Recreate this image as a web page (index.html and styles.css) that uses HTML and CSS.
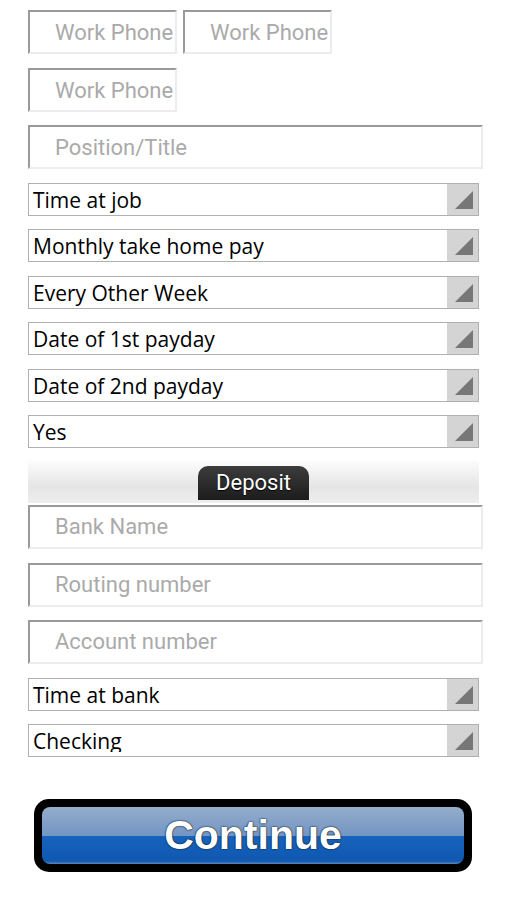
FILE: index.html
```html
<!DOCTYPE html>
<html lang="en">
<head>
    <meta charset="UTF-8">
    <meta name="viewport" content="width=device-width, initial-scale=1.0">
    <title>Employment and Deposit</title>
    <link rel="stylesheet" href="styles.css">
</head>
<body>

<form class="form" onsubmit="return false">
    <div class="phones">
        <input class="field small" type="text" placeholder="Work Phone">
        <input class="field small" type="text" placeholder="Work Phone">
    </div>
    <input class="field small gap13" type="text" placeholder="Work Phone">
    <input class="field wide" type="text" placeholder="Position/Title">

    <div class="select"><span class="value">Time at job</span><span class="arrow"></span></div>
    <div class="select"><span class="value">Monthly take home pay</span><span class="arrow"></span></div>
    <div class="select"><span class="value">Every Other Week</span><span class="arrow"></span></div>
    <div class="select"><span class="value">Date of 1st payday</span><span class="arrow"></span></div>
    <div class="select"><span class="value">Date of 2nd payday</span><span class="arrow"></span></div>
    <div class="select last"><span class="value">Yes</span><span class="arrow"></span></div>

    <div class="band">
        <div class="tab">Deposit</div>
    </div>

    <input class="field wide" type="text" placeholder="Bank Name">
    <input class="field wide gap13" type="text" placeholder="Routing number">
    <input class="field wide" type="text" placeholder="Account number">

    <div class="select"><span class="value">Time at bank</span><span class="arrow"></span></div>
    <div class="select bottom"><span class="value cut">Checking</span><span class="arrow"></span></div>

    <button class="continue" type="submit"><span class="inner">Continue</span></button>
</form>

</body>
</html>
```

FILE: styles.css
```css
body {
    margin: 0;
    background: #fff;
    font-family: Roboto, "Liberation Sans", sans-serif;
}
.form {
    display: flex;
    flex-direction: column;
    align-items: flex-start;
    padding: 10px 0 0 28px;
}
.phones {
    display: flex;
    gap: 6px;
    margin-bottom: 14px;
}
.field {
    box-sizing: border-box;
    height: 44px;
    margin: 0 0 14px 0;
    padding: 0 0 0 25px;
    border: 2px solid;
    border-color: #9a9a9a #ececec #ececec #9a9a9a;
    background: #fff;
    font-family: Roboto, sans-serif;
    font-size: 22px;
    color: #333;
    outline: none;
}
.phones .field { margin: 0; }
.field::placeholder { color: #aaa; }
.small { width: 149px; }
.wide { width: 455px; }
.gap13 { margin-bottom: 13px; }

.select {
    box-sizing: border-box;
    display: flex;
    width: 451px;
    height: 33px;
    margin-bottom: 13.4px;
    border: 1px solid #b0b0b0;
    background: #fff;
}
.select.last { margin-bottom: 12px; }
.select.bottom { margin-bottom: 42px; }
.value {
    flex: 1;
    padding-left: 4px;
    font-family: "Open Sans", sans-serif;
    font-size: 21px;
    line-height: 32px;
    color: #000;
    white-space: nowrap;
    overflow: hidden;
}
.value.cut { height: 27px; }
.arrow {
    position: relative;
    width: 31px;
    background: #d4d4d4;
}
.arrow::after {
    content: "";
    position: absolute;
    right: 5px;
    bottom: 6px;
    border-style: solid;
    border-width: 0 0 18px 18px;
    border-color: transparent transparent #777 transparent;
}

.band {
    box-sizing: border-box;
    display: flex;
    justify-content: center;
    align-items: flex-end;
    width: 451px;
    height: 43px;
    padding-bottom: 3px;
    margin-bottom: 2px;
    background: linear-gradient(#fdfdfd, #e5e5e5 62%, #eeeeee);
}
.tab {
    box-sizing: border-box;
    width: 111px;
    height: 34px;
    border-radius: 10px 10px 0 0;
    background: linear-gradient(#3c3c3c, #1c1c1c);
    color: #fff;
    font-size: 22px;
    line-height: 34px;
    text-align: center;
    text-shadow: 0 1px 1px #000;
}

.continue {
    box-sizing: border-box;
    width: 438px;
    height: 73px;
    margin-left: 6px;
    padding: 8px;
    border: none;
    border-radius: 15px;
    background: #000;
    cursor: pointer;
}
.inner {
    display: block;
    height: 100%;
    border-radius: 8px;
    background: linear-gradient(#94adcc, #7396c4 50%, #1763bd 51%, #0f58b0 95%, #5f87bd);
    color: #fff;
    font-family: "Liberation Sans", Arial, sans-serif;
    font-weight: bold;
    font-size: 41px;
    line-height: 56px;
    text-shadow: 0 0 2px #123, 0 0 1px #000;
}
```
